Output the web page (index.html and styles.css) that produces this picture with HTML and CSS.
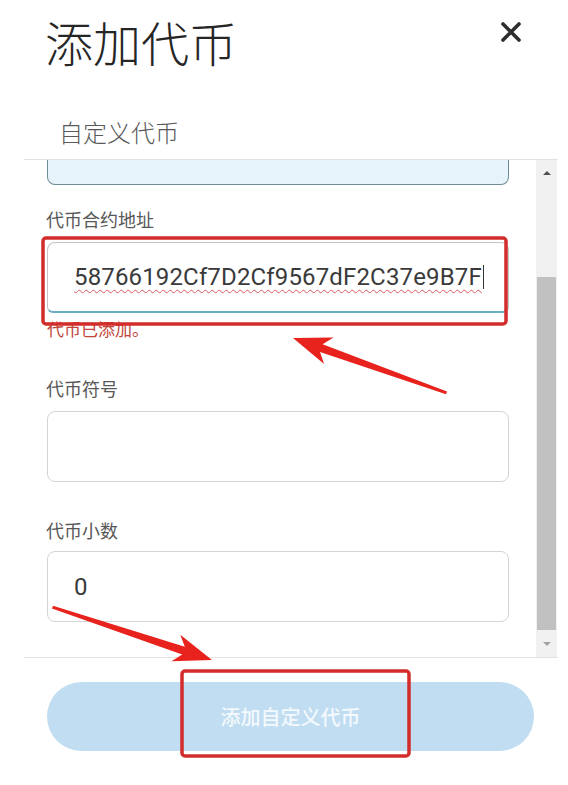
FILE: index.html
```html
<!DOCTYPE html>
<html lang="zh-CN">
<head>
<meta charset="utf-8">
<title>添加代币</title>
<link rel="stylesheet" href="styles.css">
</head>
<body>
<div class="page">
  <header class="header">
    <h1 class="title">添加代币</h1>
    <svg class="close" width="22" height="22" viewBox="0 0 22 22" aria-label="关闭">
      <path d="M3 3 L19 19 M19 3 L3 19" stroke="#2e2e2e" stroke-width="3.6" stroke-linecap="round" fill="none"/>
    </svg>
  </header>
  <div class="tab">自定义代币</div>

  <div class="scroll">
    <div class="form">
      <div class="frag"></div>

      <div class="label label-first">代币合约地址</div>
      <div class="field field-focus"><span class="addr">58766192Cf7D2Cf9567dF2C37e9B7F</span><span class="caret"></span></div>
      <div class="error">代币已添加。</div>

      <div class="label label-after-error">代币符号</div>
      <div class="field"></div>

      <div class="label label-next">代币小数</div>
      <div class="field field-last"><span class="value">0</span></div>
    </div>
    <div class="scrollbar">
      <div class="sb-btn sb-up"><span class="tri-up"></span></div>
      <div class="sb-gap"></div>
      <div class="sb-thumb"></div>
      <div class="sb-btn sb-down"><span class="tri-down"></span></div>
    </div>
  </div>

  <div class="footer">
    <button class="submit">添加自定义代币</button>
  </div>

  <svg class="annot" width="568" height="785" viewBox="0 0 568 785">
    <rect x="43" y="238" width="463" height="86" rx="3" fill="none" stroke="#d22d2a" stroke-width="3.5"/>
    <rect x="182" y="671" width="227" height="85" rx="3" fill="none" stroke="#d22d2a" stroke-width="3.5"/>
    <polygon fill="#e8231d" points="293,338 333.5,337.6 322.6,344.3 447,391.4 446,394.2 320,351.9 324.1,364"/>
    <polygon fill="#e8231d" points="212,660 171.5,661.3 182.2,654.4 52,608.6 53,605.8 184.8,646.8 180.3,634.7"/>
  </svg>
</div>
</body>
</html>
```

FILE: styles.css
```css
* { box-sizing: border-box; }

html, body {
  margin: 0;
  padding: 0;
  background: #ffffff;
}

body {
  font-family: "Noto Sans CJK SC", "Noto Sans", sans-serif;
  color: #333333;
}

.page {
  position: relative;
  width: 568px;
  height: 785px;
  overflow: hidden;
}

.header {
  display: flex;
  justify-content: space-between;
  align-items: flex-start;
  padding: 17px 46px 0 45px;
}

.title {
  margin: 0;
  font-size: 48px;
  line-height: 48px;
  font-weight: 300;
  color: #262626;
}

.close {
  margin-top: 4px;
  display: block;
}

.tab {
  margin-top: 55px;
  padding-left: 59px;
  font-size: 24px;
  line-height: 24px;
  font-weight: 300;
  color: #595959;
}

.scroll {
  margin: 15px 0 0 24px;
  width: 534px;
  height: 499px;
  border-top: 1px solid #e2e2e2;
  border-bottom: 1px solid #e2e2e2;
  display: flex;
}

.form {
  width: 512px;
  padding-left: 23px;
}

.frag {
  width: 462px;
  height: 25px;
  background: #e6f3fb;
  border: 1px solid #6e8c98;
  border-top: none;
  border-radius: 0 0 8px 8px;
}

.label {
  font-size: 18px;
  line-height: 18px;
  color: #585858;
  margin-left: -1px;
}

.label-first { margin-top: 25px; }
.label-after-error { margin-top: 41px; }
.label-next { margin-top: 39px; }

.field {
  margin-top: 14px;
  width: 462px;
  height: 71px;
  border: 1px solid #d4d4d4;
  border-radius: 8px;
  display: flex;
  align-items: center;
  padding-left: 26px;
  font-family: Roboto, "Noto Sans", sans-serif;
  font-size: 24px;
  color: #3a3a3a;
}

.field-focus {
  border-color: #c4c4c4;
  border-bottom: 2px solid #6aaec4;
  border-radius: 8px 8px 6px 6px;
}

.field-last { margin-top: 12px; }

.addr {
  text-decoration: underline wavy #e0585a;
  text-decoration-thickness: 1px;
  text-underline-offset: 4px;
  letter-spacing: 0.15px;
}

.caret {
  display: inline-block;
  width: 1px;
  height: 24px;
  background: #333333;
  margin-left: 1px;
}

.value { padding-left: 0; }

.error {
  margin-top: 7px;
  font-size: 17px;
  line-height: 18px;
  color: #c2463a;
}

.scrollbar {
  width: 21px;
  background: #f1f1f1;
  display: flex;
  flex-direction: column;
}

.sb-btn {
  display: flex;
  align-items: center;
  justify-content: center;
}

.sb-up { height: 26px; }
.sb-down { flex: 1; }

.sb-gap { height: 91px; }

.sb-thumb {
  height: 353px;
  margin: 0 1px;
  background: #c1c1c1;
}

.tri-up {
  width: 0;
  height: 0;
  border-left: 4px solid transparent;
  border-right: 4px solid transparent;
  border-bottom: 4px solid #505050;
}

.tri-down {
  width: 0;
  height: 0;
  border-left: 4px solid transparent;
  border-right: 4px solid transparent;
  border-top: 4px solid #a3a3a3;
}

.footer {
  padding: 24px 0 0 47px;
}

.submit {
  display: flex;
  align-items: center;
  justify-content: center;
  width: 487px;
  height: 69px;
  border: none;
  border-radius: 35px;
  background: #c0ddf1;
  color: #f3f9fd;
  font-family: "Noto Sans CJK SC", "Noto Sans", sans-serif;
  font-size: 20px;
  font-weight: 500;
  padding: 0;
}

.annot {
  position: absolute;
  top: 0;
  left: 0;
  pointer-events: none;
}
```
